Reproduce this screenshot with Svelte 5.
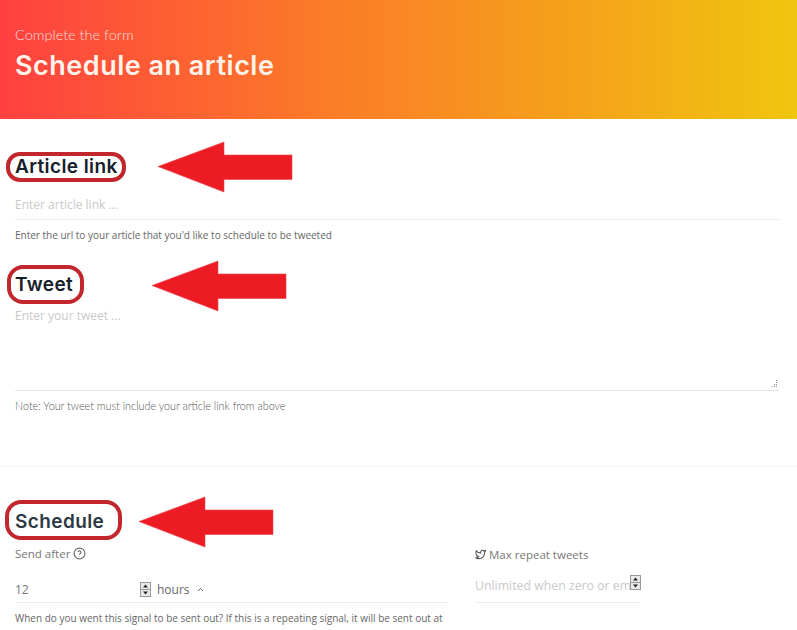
<script lang="ts">
  let articleLink = $state('');
  let tweet = $state('');
  let sendAfter = $state(12);
  let maxRepeat = $state('');
</script>

{#snippet arrow(cls: string)}
  <svg class="arrow {cls}" width="136" height="52" viewBox="0 0 136 52" aria-hidden="true">
    <path d="M1 25.5 67 1v13h68v24.500H67V51z" fill="#ed1c24" stroke="#e8474d" stroke-width="0.6" />
  </svg>
{/snippet}

{#snippet spinner()}
  <span class="spinner" aria-hidden="true">
    <svg width="11" height="15" viewBox="0 0 11 15">
      <rect x="0.500" y="0.500" width="10" height="14" fill="#e9e9e9" stroke="#9a9a9a" />
      <path d="M0 7.500h11" stroke="#9a9a9a" />
      <path d="M5.500 2.500 8 5.500H3zM5.500 12.500 3 9.500h5z" fill="#222" />
    </svg>
  </span>
{/snippet}

<div class="page">
  <header class="hero">
    <p class="eyebrow">Complete the form</p>
    <h1>Schedule an article</h1>
  </header>

  <form class="form">
    <section class="link-section">
      <div class="heading-row">
        <h2 class="ring ring-link">Article link</h2>
        {@render arrow('arrow-link')}
      </div>
      <input class="field" placeholder="Enter article link ..." bind:value={articleLink} />
      <p class="help">Enter the url to your article that you'd like to schedule to be tweeted</p>
    </section>

    <section class="tweet-section">
      <div class="heading-row">
        <h2 class="ring ring-tweet">Tweet</h2>
        {@render arrow('arrow-tweet')}
      </div>
      <div class="textarea-wrap">
        <textarea placeholder="Enter your tweet ..." bind:value={tweet}></textarea>
        <svg class="grip" width="7" height="8" viewBox="0 0 7 8" aria-hidden="true">
          <path d="M5.500 0v1M5.500 2v1M5.500 4v1M5.500 6v1M3.500 4v1M3.500 6v1M1 6v1" stroke="#8a8a8a" />
        </svg>
      </div>
      <p class="help note">Note: Your tweet must include your article link from above</p>
    </section>

    <hr class="divider" />

    <section class="schedule-section">
      <div class="heading-row">
        <h2 class="ring ring-schedule">Schedule</h2>
        {@render arrow('arrow-schedule')}
      </div>
      <div class="columns">
        <div class="col-left">
          <div class="label">
            Send after
            <svg class="icon" width="13" height="13" viewBox="0 0 24 24" fill="none" stroke="#666" stroke-width="2" aria-hidden="true">
              <circle cx="12" cy="12" r="10" />
              <path d="M9.100 9a3 3 0 0 1 5.800 1c0 2-3 2.600-3 4.500M12 17.500v.5" />
            </svg>
          </div>
          <div class="field-row send">
            <input class="num" type="text" bind:value={sendAfter} />
            {@render spinner()}
            <span class="unit">hours</span>
            <svg class="caret" width="7" height="5" viewBox="0 0 7 5" fill="none" stroke="#666" aria-hidden="true">
              <path d="M1 4 3.500 1.500 6 4" />
            </svg>
          </div>
          <p class="help when">When do you went this signal to be sent out? If this is a repeating signal, it will be sent out at</p>
        </div>
        <div class="col-right">
          <div class="label">
            <svg class="icon" width="11" height="11" viewBox="0 0 24 24" fill="none" stroke="#555" stroke-width="2.400" aria-hidden="true">
              <path d="M23 3a10.900 10.900 0 0 1-3 1.530 4.480 4.480 0 0 0-7.860 3v1A10.660 10.660 0 0 1 3 4s-4 9 5 13a11.640 11.640 0 0 1-7 2c9 5 20 0 20-11.500a4.500 4.500 0 0 0-.08-.83A7.720 7.720 0 0 0 23 3z" />
            </svg>
            Max repeat tweets
          </div>
          <div class="field-row repeat">
            <input class="num" placeholder="Unlimited when zero or empty" bind:value={maxRepeat} />
            {@render spinner()}
          </div>
        </div>
      </div>
    </section>
  </form>
</div>

<style>
  :global(body) {
    margin: 0;
    background: #fff;
  }

  .page {
    height: 630px;
    overflow: hidden;
    font-family: 'Open Sans', sans-serif;
    color: #555;
  }

  .hero {
    box-sizing: border-box;
    height: 119px;
    padding: 27px 15px 0;
    background: linear-gradient(90deg, #ff4040 0%, #fb7a28 40%, #f0c50f 100%);
    color: #fff;
  }

  .eyebrow {
    margin: 0;
    font-family: 'Lato', sans-serif;
    font-size: 14.500px;
    font-weight: 300;
    line-height: 16px;
    color: rgba(255, 255, 255, 0.8);
  }

  h1 {
    margin: 7px 0 0;
    font-family: 'Inter', sans-serif;
    font-size: 27px;
    font-weight: 600;
    line-height: 32px;
    letter-spacing: 0.5px;
    color: #fff3ea;
  }

  .form {
    display: block;
  }

  .link-section {
    padding: 33px 18px 0 15px;
  }

  .tweet-section {
    padding: 22px 18px 0 15px;
  }

  .schedule-section {
    padding: 33px 18px 0 15px;
  }

  .heading-row {
    position: relative;
  }

  h2 {
    margin: 0;
    font-family: 'Inter', sans-serif;
    font-size: 19px;
    font-weight: 600;
    letter-spacing: 0.4px;
    color: #16202c;
  }

  .ring {
    display: block;
    box-sizing: border-box;
    border: 4px solid #c1272d;
  }

  .ring-link {
    width: 120px;
    height: 30px;
    margin-left: -9px;
    padding-left: 5px;
    border-radius: 14px;
    line-height: 22px;
  }

  .ring-tweet {
    width: 77px;
    height: 39px;
    margin-left: -8px;
    padding-left: 4px;
    border-radius: 16px;
    line-height: 31px;
  }

  .ring-schedule {
    width: 117px;
    height: 40px;
    margin-left: -10px;
    padding-left: 6px;
    border-radius: 16px;
    line-height: 36px;
    color: #2d3a45;
  }

  .arrow {
    position: absolute;
  }

  .arrow-link {
    left: 142px;
    top: -11px;
  }

  .arrow-tweet {
    left: 136px;
    top: -5px;
  }

  .arrow-schedule {
    left: 123px;
    top: -4px;
  }

  input,
  textarea {
    display: block;
    box-sizing: border-box;
    width: 100%;
    border: 0;
    outline: 0;
    padding: 0;
    background: transparent;
    font-family: 'Open Sans', sans-serif;
    font-size: 12px;
    color: #777;
  }

  input::placeholder,
  textarea::placeholder {
    color: #c9c9c9;
    opacity: 1;
  }

  .field {
    height: 38px;
    padding-top: 7px;
    border-bottom: 1px solid #eaeaea;
  }

  .help {
    margin: 8px 0 0;
    font-family: 'Open Sans', sans-serif;
    font-size: 10px;
    line-height: 15px;
    color: #666;
  }

  .textarea-wrap {
    position: relative;
    border-bottom: 1px solid #e6e6e6;
  }

  textarea {
    height: 86px;
    padding-top: 3px;
    resize: none;
  }

  .grip {
    position: absolute;
    right: 1px;
    bottom: 2px;
  }

  .note {
    margin-top: 7px;
    font-family: 'Lato', sans-serif;
    font-weight: 300;
    font-size: 10.800px;
    color: #555;
  }

  .divider {
    margin: 53px 0 0;
    border: 0;
    border-top: 1px solid #f3f3f3;
  }

  .columns {
    display: flex;
    margin-top: 5px;
  }

  .col-left {
    width: 460px;
    flex: none;
  }

  .col-right {
    width: 165px;
    flex: none;
  }

  .label {
    display: flex;
    align-items: center;
    gap: 3px;
    height: 16px;
    font-size: 11.500px;
    color: #777;
  }

  .col-right .label {
    margin-top: 1px;
  }

  .field-row {
    display: flex;
    box-sizing: border-box;
    border-bottom: 1px solid #ececec;
    font-size: 12px;
  }

  .field-row .num {
    width: 125px;
    flex: none;
  }

  .send {
    align-items: center;
    height: 32px;
    margin: 10px 28px 0 0;
    padding-top: 6px;
  }

  .unit {
    margin-left: 6px;
    color: #666;
  }

  .caret {
    margin-left: 7px;
  }

  .spinner {
    display: flex;
    flex: none;
  }

  .repeat {
    align-items: flex-start;
    height: 41px;
    padding-top: 13px;
  }

  .repeat .num {
    width: 155px;
    height: 18px;
    padding-top: 2px;
    font-size: 12.300px;
  }

  .when {
    margin-top: 8px;
  }
</style>
